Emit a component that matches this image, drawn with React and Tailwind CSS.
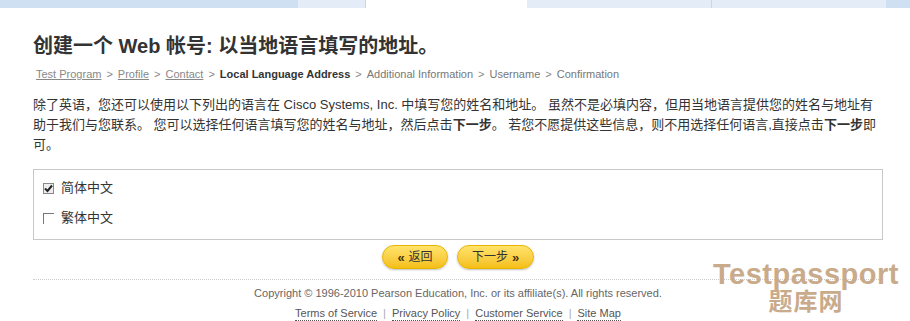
import React from 'react';

function Crumb({ children, link, bold }) {
  if (link) {
    return <a className="underline text-[#888]">{children}</a>;
  }
  return <span className={bold ? 'font-bold text-[#333]' : 'text-[#777]'}>{children}</span>;
}

function App() {
  const cjk = { fontFamily: '"Liberation Sans", "Noto Sans CJK SC", sans-serif' };

  return (
    <div className="w-[910px] h-[321px] bg-white overflow-hidden relative" style={cjk}>
      {/* top tab strip */}
      <div className="flex h-[8px]">
        <div className="w-[298px] bg-[#cfe0f3]" />
        <div className="w-[68px] bg-[#e3ecf7] border-r border-[#c8d6e6]" />
        <div className="w-[161px] bg-white" />
        <div className="w-[185px] bg-[#e3ecf7] border-r border-[#c8d6e6]" />
        <div className="w-[174px] bg-[#e3ecf7]" />
        <div className="flex-1 bg-[#cfe0f3]" />
      </div>

      <div className="px-[33px] w-[850px] box-content">
        <h1 className="mt-[26px] text-[20px] leading-[24px] font-bold text-[#333]">
          创建一个 Web 帐号: 以当地语言填写的地址。
        </h1>

        <div className="mt-[9px] text-[11px] leading-[14px] text-[#888] pl-[3px] flex gap-[5px]">
          <Crumb link>Test Program</Crumb><span>&gt;</span>
          <Crumb link>Profile</Crumb><span>&gt;</span>
          <Crumb link>Contact</Crumb><span>&gt;</span>
          <Crumb bold>Local Language Address</Crumb><span>&gt;</span>
          <Crumb>Additional Information</Crumb><span>&gt;</span>
          <Crumb>Username</Crumb><span>&gt;</span>
          <Crumb>Confirmation</Crumb>
        </div>

        <p className="mt-[14px] w-[850px] text-[13px] leading-[20px] text-[#333]">
          除了英语，您还可以使用以下列出的语言在 Cisco Systems, Inc. 中填写您的姓名和地址。 虽然不是必填内容，但用当地语言提供您的姓名与地址有助于我们与您联系。 您可以选择任何语言填写您的姓名与地址，然后点击<b>下一步</b>。 若您不愿提供这些信息，则不用选择任何语言,直接点击<b>下一步</b>即可。
        </p>

        <div className="mt-[14px] w-[850px] h-[71px] border border-[#c8c8c8] px-[9px] pt-[9px] text-[13px] text-[#333]">
          <label className="flex items-center gap-[7px] h-[18px]">
            <span className="w-[11px] h-[11px] border border-[#888] bg-[#eee] flex items-center justify-center">
              <svg width="9" height="9" viewBox="0 0 9 9">
                <path d="M1 4.5 L3.5 7 L8 1.5" stroke="#222" strokeWidth="2" fill="none" />
              </svg>
            </span>
            简体中文
          </label>
          <label className="flex items-center gap-[7px] h-[18px] mt-[12px]">
            <span className="w-[11px] h-[11px] border-l border-t border-[#777] bg-white" />
            繁体中文
          </label>
        </div>

        <div className="flex justify-center gap-[9px] mt-[5px]">
          <button className="w-[66px] h-[24px] rounded-full bg-gradient-to-b from-[#ffe36a] to-[#f5bf10] border border-[#e8b400] text-[12px] text-[#333] flex items-center justify-center gap-[4px] shadow-[0_1px_2px_rgba(0,0,0,0.25)]">
            <span className="text-[13px] font-bold text-[#4a3300] leading-none">«</span><span>返回</span>
          </button>
          <button className="w-[77px] h-[24px] rounded-full bg-gradient-to-b from-[#ffe36a] to-[#f5bf10] border border-[#e8b400] text-[12px] text-[#333] flex items-center justify-center gap-[4px] shadow-[0_1px_2px_rgba(0,0,0,0.25)]">
            <span>下一步</span><span className="text-[13px] font-bold text-[#4a3300] leading-none">»</span>
          </button>
        </div>

        <div className="mt-[10px] w-[850px] border-t border-dotted border-[#ccc]" />

        <div className="mt-[6px] w-[850px] text-center text-[11px] leading-[14px] text-[#666]">
          Copyright © 1996-2010 Pearson Education, Inc. or its affiliate(s). All rights reserved.
        </div>
        <div className="mt-[6px] w-[850px] flex justify-center gap-[6px] text-[11px] leading-[14px] text-[#555]">
          <a className="border-b border-dotted border-[#555]">Terms of Service</a><span className="text-[#aaa]">|</span>
          <a className="border-b border-dotted border-[#555]">Privacy Policy</a><span className="text-[#aaa]">|</span>
          <a className="border-b border-dotted border-[#555]">Customer Service</a><span className="text-[#aaa]">|</span>
          <a className="border-b border-dotted border-[#555]">Site Map</a>
        </div>
      </div>

      {/* watermark */}
      <div className="absolute left-[710px] top-[260px] w-[192px] text-center text-[#c9ab8c] font-bold leading-none">
        <div className="text-[29px] tracking-[0.5px]">Testpassport</div>
        <div className="text-[24px] mt-[1px] tracking-[1px]">题库网</div>
      </div>
    </div>
  );
}

export default App;
